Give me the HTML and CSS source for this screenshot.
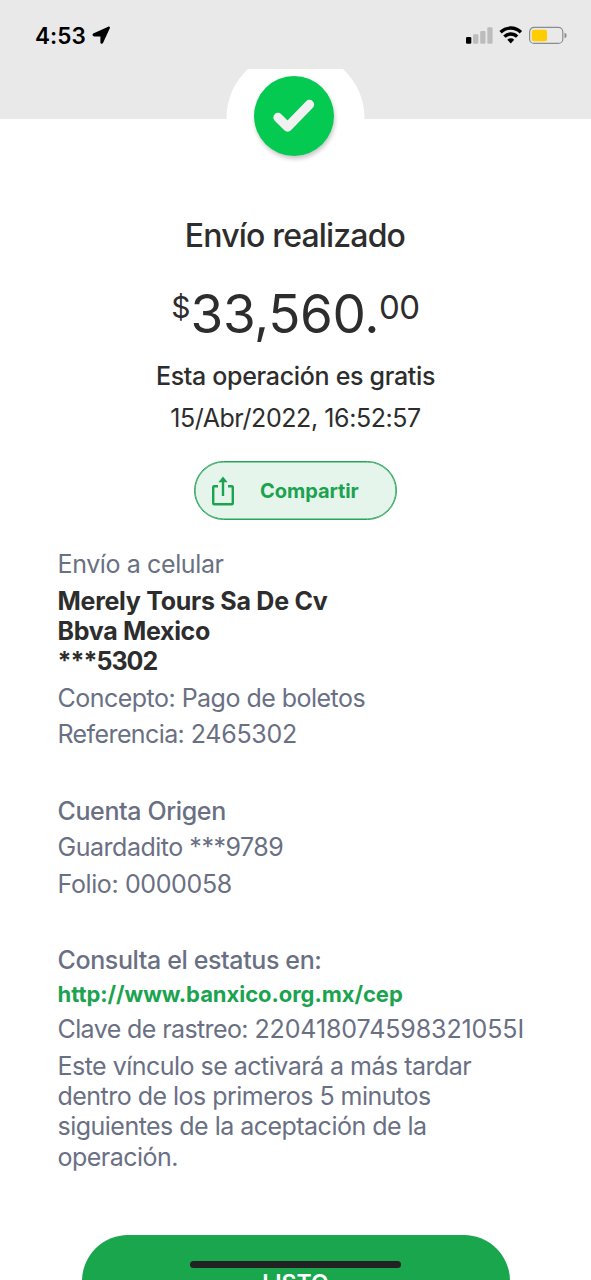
FILE: index.html
```html
<!DOCTYPE html>
<html lang="es">
<head>
<meta charset="utf-8">
<title>Envío realizado</title>
<link rel="stylesheet" href="styles.css">
</head>
<body>
<div class="screen">
  <header class="header">
    <div class="status">
      <span class="time">4:53</span>
      <svg class="location" width="19" height="19" viewBox="0 0 19 19"><path d="M1.200 7.600 16.200.7c1.200-.5 2.200.4 1.600 1.600L11 17c-.6 1.200-2.600 1-2.600-.6V10.500H2.200C.4 10.500 0 8.300 1.200 7.600Z"/></svg>
      <svg class="indicators" width="102" height="19" viewBox="0 0 102 19">
        <rect x="0" y="11" width="5.300" height="6.700" rx="1.200"/>
        <g fill="#bcbcbc"><rect x="7.100" y="8.300" width="5.300" height="9.400" rx="1.200"/><rect x="14.200" y="5" width="5.300" height="12.700" rx="1.200"/><rect x="21.300" y="1.300" width="5.300" height="16.400" rx="1.200"/></g>
        <g fill="none" stroke="#000" stroke-width="3.400"><path d="M34.600 6.300A14.300 14.300 0 0 1 54.900 6.300"/><path d="M38.400 10.600A9 9 0 0 1 51.100 10.600"/></g>
        <path d="M41.300 13.700a5 5 0 0 1 6.900 0L44.750 17.400Z"/>
        <rect x="63.600" y="1.400" width="33.200" height="16" rx="4.500" fill="none" stroke="#8c8c8c" stroke-width="1.200"/>
        <rect x="65.800" y="3.700" width="15.300" height="11.500" rx="2.300" fill="#fc0"/>
        <path d="M98.500 6.700c2.800.7 2.800 4.800 0 5.500Z" fill="#8c8c8c"/>
      </svg>
    </div>
    <div class="notch"><svg class="bump" width="139" height="50" viewBox="0 0 139 50"><path d="M.5 50A69 69 0 0 1 22 0H117A69 69 0 0 1 138.500 50Z" fill="#fff"/></svg>
      <div class="check"><svg width="80" height="80" viewBox="0 0 80 80"><path d="M24 41.500 33.600 51 55.500 28.500" fill="none" stroke="#f1f1f1" stroke-width="9.300" stroke-linecap="round" stroke-linejoin="round"/></svg></div>
    </div>
  </header>
  <main>
    <section class="summary">
      <h1 class="title">Envío realizado</h1>
      <div class="amount"><span class="currency">$</span><span class="whole">33,560.</span><span class="cents">00</span></div>
      <div class="fee">Esta operación es gratis</div>
      <div class="date">15/Abr/2022, 16:52:57</div>
      <button class="share"><svg width="24" height="32" viewBox="0 0 24 32"><g fill="none" stroke="#1ba34f" stroke-width="2.400"><path d="M7 11.200H3.200Q2.200 11.200 2.200 12.200V28.200Q2.200 29.200 3.200 29.200H20.800Q21.800 29.200 21.800 28.200V12.200Q21.800 11.200 20.800 11.200H17" stroke-linejoin="round"/><path d="M12 21V5"/></g><path d="M7.400 7.200 12 1.600 16.600 7.200Z" fill="#1ba34f"/></svg><span>Compartir</span></button>
    </section>
    <section class="details">
      <div class="group">
        <div class="line envio">Envío a celular</div>
        <div class="recipient"><div class="name">Merely Tours Sa De Cv</div><div class="bank">Bbva Mexico</div><div class="phone">***5302</div></div>
        <div class="line concept">Concepto: Pago de boletos</div>
        <div class="line reference"><span class="label">Referencia: </span><span class="number">2465302</span></div>
      </div>
      <div class="group">
        <div class="line strong origin">Cuenta Origen</div>
        <div class="line account">Guardadito ***9789</div>
        <div class="line folio">Folio: 0000058</div>
      </div>
      <div class="group">
        <div class="line strong status-label">Consulta el estatus en:</div>
        <div class="link">http://www.banxico.org.mx/cep</div>
        <div class="line tracking"><span class="label">Clave de rastreo: </span><span class="code">220418074598321055I</span></div>
        <p class="note">Este vínculo se activará a más tardar<br>dentro de los primeros 5 minutos<br>siguientes de la aceptación de la<br>operación.</p>
      </div>
    </section>
    <button class="done">LISTO</button>
  </main>
  <div class="home"></div>
</div>
</body>
</html>
```
FILE: styles.css
```css
* { box-sizing: border-box; margin: 0; padding: 0; }
body { background: #fff; font-family: Inter, "Liberation Sans", sans-serif; color: #2d2d2d; }
button { font-family: inherit; }
svg { display: block; }
.screen { position: relative; width: 591px; height: 1280px; overflow: hidden; background: #fff; }
.header { height: 119px; background: #e9e9e9; }
.status { display: flex; align-items: center; height: 69px; padding: 2px 23px 0 35px; color: #000; }
.time { font-size: 22.5px; font-weight: 600; line-height: 28px; letter-spacing: .1px; }
.location { margin-left: 6px; }
.indicators { margin-left: auto; }
.notch { position: relative; width: 139px; margin-left: 226px; }
.check { position: absolute; left: 28px; top: 7px; width: 80px; height: 80px; border-radius: 50%; background: #04ca51; box-shadow: 1px 3px 4px rgba(0, 0, 0, .22); }

.summary { display: flex; flex-direction: column; align-items: center; padding-top: 97px; white-space: nowrap; }
.title { font-size: 32px; font-weight: 500; line-height: 40px; letter-spacing: -.83px; padding-right: 1px; }
.amount { display: flex; align-items: flex-start; height: 64px; margin-top: 26px; }
.currency { font-size: 30px; line-height: 36px; padding-top: 7px; }
.whole { font-size: 53px; line-height: 64px; letter-spacing: -.4px; }
.cents { font-size: 33px; line-height: 40px; padding-top: 5px; letter-spacing: -.5px; }
.fee { margin-top: 15px; font-size: 25px; font-weight: 500; line-height: 30px; letter-spacing: -.32px; }
.date { margin-top: 12px; font-size: 25px; line-height: 30px; letter-spacing: -.42px; }
.share { display: flex; align-items: center; width: 203px; height: 59px; margin-top: 28px; padding-left: 16px; gap: 25px; border: 1px solid #2ba45b; border-radius: 30px; background: #e6f5ec; box-shadow: inset 0 0 0 .6px #2ba45b; color: #1ba34f; font-size: 20px; font-weight: 700; letter-spacing: -.05px; }

.details { padding: 29px 0 0 57.5px; font-size: 25px; color: #6a7083; white-space: nowrap; letter-spacing: -.38px; }
.line { line-height: 30px; margin-bottom: 6.5px; }
.strong { font-weight: 500; }
.group { margin-bottom: 46.5px; }
.recipient { font-weight: 700; line-height: 30.3px; color: #2d2d2d; margin-bottom: 6.3px; }
.name { letter-spacing: -.27px; }
.bank { letter-spacing: -.32px; }
.phone { letter-spacing: -1px; }
.concept, .note { letter-spacing: -.52px; }
.account { letter-spacing: -.48px; }
.label { letter-spacing: -.6px; }
.number { letter-spacing: -.25px; }
.code { letter-spacing: -.1px; }
.link { font-size: 22px; font-weight: 700; line-height: 28px; margin-bottom: 6px; color: #1ba34f; letter-spacing: -.05px; }
.status-label { margin-bottom: 5px; }
.note { line-height: 30.3px; }
.details .group:last-child { margin-bottom: 0; }
.done { display: block; width: 428px; height: 96px; margin: 63px 0 0 81.5px; border: 0; border-radius: 46px; background: #1aa64d; color: #fff; font-size: 23px; font-weight: 600; }
.home { position: absolute; left: 190px; top: 1261px; width: 211px; height: 7px; border-radius: 4px; background: #222; }
```
